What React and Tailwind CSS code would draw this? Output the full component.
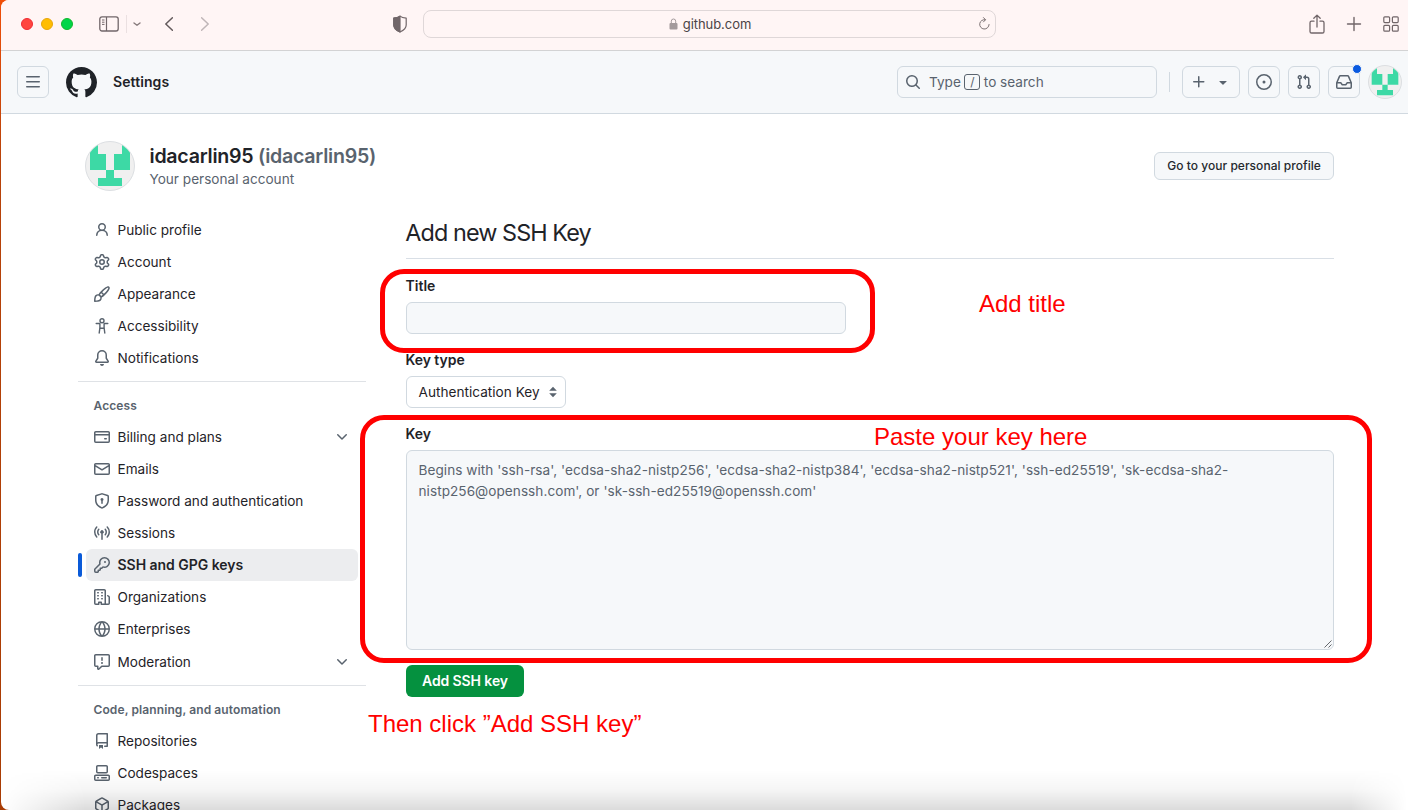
import React from "react";

const ICONS = {
  person:
    "M10.561 8.073a6.005 6.005 0 0 1 3.432 5.142.75.75 0 1 1-1.498.07 4.5 4.5 0 0 0-8.99 0 .75.75 0 0 1-1.498-.07 6.004 6.004 0 0 1 3.431-5.142 3.999 3.999 0 1 1 5.123 0ZM10.5 5a2.5 2.5 0 1 0-5 0 2.5 2.5 0 0 0 5 0Z",
  gear:
    "M8 0a8.2 8.2 0 0 1 .701.031C9.444.095 9.99.645 10.16 1.29l.288 1.107c.018.066.079.158.212.224.231.114.454.243.668.386.123.082.233.09.299.071l1.103-.303c.644-.176 1.392.021 1.82.63.27.385.506.792.704 1.218.315.675.111 1.422-.364 1.891l-.814.806c-.049.048-.098.147-.088.294.016.257.016.515 0 .772-.01.147.038.246.088.294l.814.806c.475.469.679 1.216.364 1.891a7.977 7.977 0 0 1-.704 1.217c-.428.61-1.176.807-1.82.63l-1.102-.302c-.067-.019-.177-.011-.3.071a5.909 5.909 0 0 1-.668.386c-.133.066-.194.158-.211.224l-.29 1.106c-.168.646-.715 1.196-1.458 1.26a8.006 8.006 0 0 1-1.402 0c-.743-.064-1.289-.614-1.458-1.26l-.289-1.106c-.018-.066-.079-.158-.212-.224a5.738 5.738 0 0 1-.668-.386c-.123-.082-.233-.09-.299-.071l-1.103.303c-.644.176-1.392-.021-1.82-.63a8.12 8.12 0 0 1-.704-1.218c-.315-.675-.111-1.422.363-1.891l.815-.806c.05-.048.098-.147.088-.294a6.214 6.214 0 0 1 0-.772c.01-.147-.038-.246-.088-.294l-.815-.806C.635 6.045.431 5.298.746 4.623a7.92 7.92 0 0 1 .704-1.217c.428-.61 1.176-.807 1.82-.63l1.102.302c.067.019.177.011.3-.071.214-.143.437-.272.668-.386.133-.066.194-.158.211-.224l.29-1.106C6.009.645 6.556.095 7.299.03 7.53.01 7.764 0 8 0Zm-.571 1.525c-.036.003-.108.036-.137.146l-.289 1.105c-.147.561-.549.967-.998 1.189-.173.086-.34.183-.5.29-.417.278-.97.423-1.529.27l-1.103-.303c-.109-.03-.175.016-.195.045-.22.312-.412.644-.573.99-.014.031-.021.11.059.19l.815.806c.411.406.562.957.53 1.456a4.709 4.709 0 0 0 0 .582c.032.499-.119 1.05-.53 1.456l-.815.806c-.081.08-.073.159-.059.19.162.346.353.677.573.989.02.03.085.076.195.046l1.102-.303c.56-.153 1.113-.008 1.53.27.161.107.328.204.501.29.447.222.85.629.997 1.189l.289 1.105c.029.109.101.143.137.146a6.6 6.6 0 0 0 1.142 0c.036-.003.108-.036.137-.146l.289-1.105c.147-.561.549-.967.998-1.189.173-.086.34-.183.5-.29.417-.278.97-.423 1.529-.27l1.103.303c.109.029.175-.016.195-.045.22-.313.411-.644.573-.99.014-.031.021-.11-.059-.19l-.815-.806c-.411-.406-.562-.957-.53-1.456a4.709 4.709 0 0 0 0-.582c-.032-.499.119-1.05.53-1.456l.815-.806c.081-.08.073-.159.059-.19a6.464 6.464 0 0 0-.573-.989c-.02-.03-.085-.076-.195-.046l-1.102.303c-.56.153-1.113.008-1.53-.27a4.44 4.44 0 0 0-.501-.29c-.447-.222-.85-.629-.997-1.189l-.289-1.105c-.029-.11-.101-.143-.137-.146a6.6 6.6 0 0 0-1.142 0ZM11 8a3 3 0 1 1-6 0 3 3 0 0 1 6 0ZM9.5 8a1.5 1.5 0 1 0-3.001.001A1.5 1.5 0 0 0 9.5 8Z",
  paintbrush:
    "M11.134 1.535c.7-.509 1.416-.942 2.076-1.155.649-.21 1.463-.267 2.069.34.603.601.568 1.411.368 2.07-.202.668-.624 1.39-1.125 2.096-1.011 1.424-2.496 2.987-3.775 4.249-1.098 1.084-2.132 1.839-3.04 2.3a3.744 3.744 0 0 1-1.055 3.217c-.431.431-1.065.691-1.657.861-.614.177-1.294.287-1.914.357A21.151 21.151 0 0 1 .797 16H.743l.007-.75H.749L.742 16a.75.75 0 0 1-.743-.742l.743-.008-.742.007v-.054a21.25 21.25 0 0 1 .13-2.284c.067-.647.187-1.287.358-1.914.17-.591.43-1.226.86-1.657a3.746 3.746 0 0 1 3.227-1.054c.466-.893 1.225-1.907 2.314-2.982 1.271-1.255 2.833-2.75 4.245-3.777ZM1.62 13.089c-.051.464-.086.929-.104 1.395.466-.018.932-.053 1.396-.104a10.511 10.511 0 0 0 1.668-.309c.526-.151.856-.325 1.011-.48a2.25 2.25 0 1 0-3.182-3.182c-.155.155-.329.485-.48 1.01a10.515 10.515 0 0 0-.309 1.67Zm10.396-10.34c-1.224.89-2.605 2.189-3.822 3.384l1.718 1.718c1.21-1.205 2.51-2.597 3.387-3.833.47-.662.78-1.227.912-1.662.134-.444.032-.551.009-.575h-.001V1.78c-.014-.014-.113-.113-.548.027-.432.14-.995.462-1.655.942Zm-4.832 7.266-.001.001a9.859 9.859 0 0 0 1.63-1.142L7.155 7.216a9.7 9.7 0 0 0-1.161 1.607c.482.302.889.71 1.19 1.192Z",
  bell:
    "M8 16a2 2 0 0 0 1.985-1.75c.017-.137-.097-.25-.235-.25h-3.5c-.138 0-.252.113-.235.25A2 2 0 0 0 8 16ZM3 5a5 5 0 0 1 10 0v2.947c0 .05.015.098.042.139l1.703 2.555A1.519 1.519 0 0 1 13.482 13H2.518a1.516 1.516 0 0 1-1.263-2.36l1.703-2.554A.255.255 0 0 0 3 7.947Zm5-3.5A3.5 3.5 0 0 0 4.5 5v2.947c0 .346-.102.683-.294.97l-1.703 2.556a.017.017 0 0 0-.003.01l.001.006c0 .002.002.004.004.006l.006.004.007.001h10.964l.007-.001.006-.004.004-.006.001-.007a.017.017 0 0 0-.003-.01l-1.703-2.554a1.745 1.745 0 0 1-.294-.97V5A3.5 3.5 0 0 0 8 1.5Z",
  card:
    "M10.75 9a.75.75 0 0 0 0 1.5h1.5a.75.75 0 0 0 0-1.5h-1.5ZM0 3.75C0 2.784.784 2 1.75 2h12.5c.966 0 1.75.784 1.75 1.75v8.5A1.75 1.75 0 0 1 14.25 14H1.75A1.75 1.75 0 0 1 0 12.25ZM14.5 6.5h-13v5.75c0 .138.112.25.25.25h12.5a.25.25 0 0 0 .25-.25Zm0-2.75a.25.25 0 0 0-.25-.25H1.75a.25.25 0 0 0-.25.25V5h13Z",
  mail:
    "M1.75 2h12.5c.966 0 1.75.784 1.75 1.75v8.5A1.75 1.75 0 0 1 14.25 14H1.75A1.75 1.75 0 0 1 0 12.25v-8.5C0 2.784.784 2 1.75 2ZM1.5 12.251c0 .138.112.25.25.25h12.5a.25.25 0 0 0 .25-.25V5.809L8.38 9.397a.75.75 0 0 1-.76 0L1.5 5.809v6.442Zm13-8.181v-.32a.25.25 0 0 0-.25-.25H1.75a.25.25 0 0 0-.25.25v.32L8 7.88Z",
  shield:
    "m8.533.133 5.25 1.68A1.75 1.75 0 0 1 15 3.48V7c0 1.566-.32 3.182-1.303 4.682-.983 1.498-2.585 2.813-5.032 3.855a1.697 1.697 0 0 1-1.33 0c-2.447-1.042-4.049-2.357-5.032-3.855C1.32 10.182 1 8.566 1 7V3.48a1.755 1.755 0 0 1 1.217-1.667l5.25-1.68a1.748 1.748 0 0 1 1.066 0Zm-.61 1.429.001.001-5.25 1.68a.251.251 0 0 0-.174.237V7c0 1.36.275 2.666 1.057 3.859.784 1.194 2.121 2.342 4.366 3.298a.196.196 0 0 0 .154 0c2.245-.957 3.582-2.103 4.366-3.297C13.225 9.666 13.5 8.358 13.5 7V3.48a.25.25 0 0 0-.174-.238l-5.25-1.68a.25.25 0 0 0-.153 0ZM9.5 6.5c0 .536-.286 1.032-.75 1.3v2.45a.75.75 0 0 1-1.5 0V7.8A1.5 1.5 0 1 1 9.5 6.5Z",
  broadcast:
    "M8.75 8.582v5.668a.75.75 0 0 1-1.5 0V8.582a1.75 1.75 0 1 1 1.5 0Zm3.983-7.125a.75.75 0 0 1 1.06.026A7.976 7.976 0 0 1 16 7c0 2.139-.84 4.083-2.207 5.517a.75.75 0 1 1-1.086-1.034A6.474 6.474 0 0 0 14.5 7a6.474 6.474 0 0 0-1.793-4.483.75.75 0 0 1 .026-1.06Zm-9.466 0c.3.286.312.76.026 1.06A6.474 6.474 0 0 0 1.5 7a6.47 6.47 0 0 0 1.793 4.483.75.75 0 0 1-1.086 1.034A7.973 7.973 0 0 1 0 7c0-2.139.84-4.083 2.207-5.517a.75.75 0 0 1 1.06-.026Zm8.556 2.321A4.988 4.988 0 0 1 13 7a4.988 4.988 0 0 1-1.177 3.222.75.75 0 1 1-1.146-.967A3.487 3.487 0 0 0 11.5 7c0-.86-.309-1.645-.823-2.255a.75.75 0 0 1 1.146-.967Zm-6.492.958A3.48 3.48 0 0 0 4.5 7a3.48 3.48 0 0 0 .823 2.255.75.75 0 0 1-1.146.967A4.981 4.981 0 0 1 3 7a4.982 4.982 0 0 1 1.188-3.236.75.75 0 1 1 1.143.972Z",
  key:
    "M10.5 0a5.499 5.499 0 1 1-1.288 10.848l-.932.932a.749.749 0 0 1-.53.22H7v.75a.749.749 0 0 1-.22.53l-.5.5a.749.749 0 0 1-.53.22H5v.75a.749.749 0 0 1-.22.53l-.5.5a.749.749 0 0 1-.53.22h-2A1.75 1.75 0 0 1 0 14.25v-2c0-.199.079-.389.22-.53l4.932-4.932A5.5 5.5 0 0 1 10.5 0Zm-4 5.5c-.001.431.069.86.205 1.269a.75.75 0 0 1-.181.768L1.5 12.56v1.69c0 .138.112.25.25.25h1.69l.06-.06v-1.19a.75.75 0 0 1 .75-.75h1.19l.06-.06v-1.19a.75.75 0 0 1 .75-.75h1.19l1.023-1.025a.75.75 0 0 1 .768-.18A4 4 0 1 0 6.5 5.5ZM11 6a1 1 0 1 1 0-2 1 1 0 0 1 0 2Z",
  organization:
    "M1.75 16A1.75 1.75 0 0 1 0 14.25V1.75C0 .784.784 0 1.75 0h8.5C11.216 0 12 .784 12 1.75v12.5c0 .085-.006.168-.018.25h2.268a.25.25 0 0 0 .25-.25V8.285a.25.25 0 0 0-.111-.208l-1.055-.703a.749.749 0 1 1 .832-1.248l1.055.703c.487.325.779.871.779 1.456v5.965A1.75 1.75 0 0 1 14.25 16h-3.5a.766.766 0 0 1-.197-.026c-.099.017-.2.026-.303.026h-3a.75.75 0 0 1-.75-.75V14h-1v1.25a.75.75 0 0 1-.75.75Zm-.25-1.75c0 .138.112.25.25.25H4v-1.25a.75.75 0 0 1 .75-.75h2.5a.75.75 0 0 1 .75.75v1.25h2.25a.25.25 0 0 0 .25-.25V1.75a.25.25 0 0 0-.25-.25h-8.5a.25.25 0 0 0-.25.25ZM3.75 6h.5a.75.75 0 0 1 0 1.5h-.5a.75.75 0 0 1 0-1.5ZM3 3.75A.75.75 0 0 1 3.75 3h.5a.75.75 0 0 1 0 1.5h-.5A.75.75 0 0 1 3 3.75Zm4 3A.75.75 0 0 1 7.75 6h.5a.75.75 0 0 1 0 1.5h-.5A.75.75 0 0 1 7 6.75ZM7.75 3h.5a.75.75 0 0 1 0 1.5h-.5a.75.75 0 0 1 0-1.5ZM3 9.75A.75.75 0 0 1 3.75 9h.5a.75.75 0 0 1 0 1.5h-.5A.75.75 0 0 1 3 9.75ZM7.75 9h.5a.75.75 0 0 1 0 1.5h-.5a.75.75 0 0 1 0-1.5Z",
  globe:
    "M8 0a8 8 0 1 1 0 16A8 8 0 0 1 8 0ZM5.78 8.75a9.64 9.64 0 0 0 1.363 4.177c.255.426.542.832.857 1.215.245-.296.551-.705.857-1.215A9.64 9.64 0 0 0 10.22 8.75Zm4.44-1.5a9.64 9.64 0 0 0-1.363-4.177c-.307-.51-.612-.919-.857-1.215a9.927 9.927 0 0 0-.857 1.215A9.64 9.64 0 0 0 5.78 7.25Zm-5.944 1.5H1.543a6.507 6.507 0 0 0 4.666 5.5c-.123-.181-.24-.365-.352-.552-.715-1.192-1.437-2.874-1.581-4.948Zm-2.733-1.5h2.733c.144-2.074.866-3.756 1.58-4.948.12-.197.237-.381.353-.552a6.507 6.507 0 0 0-4.666 5.5Zm10.181 1.5c-.144 2.074-.866 3.756-1.58 4.948-.12.197-.237.381-.353.552a6.507 6.507 0 0 0 4.666-5.5Zm2.733-1.5a6.507 6.507 0 0 0-4.666-5.5c.123.181.24.365.353.552.714 1.192 1.436 2.874 1.58 4.948Z",
  report:
    "M0 1.75C0 .784.784 0 1.75 0h12.5C15.216 0 16 .784 16 1.75v9.5A1.75 1.75 0 0 1 14.25 13H8.06l-2.573 2.573A1.458 1.458 0 0 1 3 14.543V13H1.75A1.75 1.75 0 0 1 0 11.25Zm1.75-.25a.25.25 0 0 0-.25.25v9.5c0 .138.112.25.25.25h2a.75.75 0 0 1 .75.75v2.19l2.72-2.72a.749.749 0 0 1 .53-.22h6.5a.25.25 0 0 0 .25-.25v-9.5a.25.25 0 0 0-.25-.25Zm7 2.25v2.5a.75.75 0 0 1-1.5 0v-2.5a.75.75 0 0 1 1.5 0ZM9 9a1 1 0 1 1-2 0 1 1 0 0 1 2 0Z",
  repo:
    "M2 2.5A2.5 2.5 0 0 1 4.5 0h8.75a.75.75 0 0 1 .75.75v12.5a.75.75 0 0 1-.75.75h-2.5a.75.75 0 0 1 0-1.5h1.75v-2h-8a1 1 0 0 0-.714 1.7.75.75 0 1 1-1.072 1.05A2.495 2.495 0 0 1 2 11.5Zm10.5-1h-8a1 1 0 0 0-1 1v6.708A2.486 2.486 0 0 1 4.5 9h8ZM5 12.25a.25.25 0 0 1 .25-.25h3.5a.25.25 0 0 1 .25.25v3.25a.25.25 0 0 1-.4.2l-1.45-1.087a.249.249 0 0 0-.3 0L5.4 15.7a.25.25 0 0 1-.4-.2Z",
  codespaces:
    "M0 11.25c0-.966.784-1.75 1.75-1.75h12.5c.966 0 1.75.784 1.75 1.75v3A1.75 1.75 0 0 1 14.25 16H1.75A1.75 1.75 0 0 1 0 14.25Zm2-9.5C2 .784 2.784 0 3.75 0h8.5C13.216 0 14 .784 14 1.75v5a1.75 1.75 0 0 1-1.75 1.75h-8.5A1.75 1.75 0 0 1 2 6.75Zm1.75-.25a.25.25 0 0 0-.25.25v5c0 .138.112.25.25.25h8.5a.25.25 0 0 0 .25-.25v-5a.25.25 0 0 0-.25-.25Zm-2 9.5a.25.25 0 0 0-.25.25v3c0 .138.112.25.25.25h12.5a.25.25 0 0 0 .25-.25v-3a.25.25 0 0 0-.25-.25ZM7 12.75a.75.75 0 0 1 .75-.75h4.5a.75.75 0 0 1 0 1.5h-4.5a.75.75 0 0 1-.75-.75Zm-4 0a.75.75 0 0 1 .75-.75h.5a.75.75 0 0 1 0 1.5h-.5a.75.75 0 0 1-.75-.75Z",
  package:
    "m8.878.392 5.25 3.045c.54.314.872.89.872 1.514v6.098a1.75 1.75 0 0 1-.872 1.514l-5.25 3.045a1.75 1.75 0 0 1-1.756 0l-5.25-3.045A1.75 1.75 0 0 1 1 11.049V4.951c0-.624.332-1.201.872-1.514L7.122.392a1.75 1.75 0 0 1 1.756 0ZM7.875 1.69l-4.63 2.685L8 7.133l4.755-2.758-4.63-2.685a.248.248 0 0 0-.25 0ZM2.5 5.677v5.372c0 .09.047.171.125.216l4.625 2.683V8.432Zm6.25 8.271 4.625-2.683a.25.25 0 0 0 .125-.216V5.677L8.75 8.432Z",
  chevron:
    "M12.78 5.22a.749.749 0 0 1 0 1.06l-4.25 4.25a.749.749 0 0 1-1.06 0L3.22 6.28a.749.749 0 1 1 1.06-1.06L8 8.939l3.72-3.719a.749.749 0 0 1 1.06 0Z",
  bars:
    "M1 2.75A.75.75 0 0 1 1.75 2h12.5a.75.75 0 0 1 0 1.5H1.75A.75.75 0 0 1 1 2.75Zm0 5A.75.75 0 0 1 1.75 7h12.5a.75.75 0 0 1 0 1.5H1.75A.75.75 0 0 1 1 7.75ZM1.75 12h12.5a.75.75 0 0 1 0 1.5H1.75a.75.75 0 0 1 0-1.5Z",
  github:
    "M8 0c4.42 0 8 3.58 8 8a8.013 8.013 0 0 1-5.45 7.59c-.4.08-.55-.17-.55-.38 0-.27.01-1.13.01-2.2 0-.75-.25-1.23-.54-1.48 1.78-.2 3.65-.88 3.65-3.95 0-.88-.31-1.59-.82-2.15.08-.2.36-1.02-.08-2.12 0 0-.67-.22-2.2.82-.64-.18-1.32-.27-2-.27-.68 0-1.36.09-2 .27-1.53-1.03-2.2-.82-2.2-.82-.44 1.1-.16 1.92-.08 2.12-.51.56-.82 1.28-.82 2.15 0 3.06 1.86 3.75 3.64 3.95-.23.2-.44.55-.51 1.07-.46.21-1.61.55-2.33-.66-.15-.24-.6-.83-1.23-.82-.67.01-.27.38.01.53.34.19.73.9.82 1.13.16.45.68 1.31 2.69.94 0 .67.01 1.3.01 1.49 0 .21-.15.45-.55.38A7.995 7.995 0 0 1 0 8c0-4.42 3.58-8 8-8Z",
  search:
    "M10.68 11.74a6 6 0 0 1-7.922-8.982 6 6 0 0 1 8.982 7.922l3.04 3.04a.749.749 0 0 1-.326 1.275.749.749 0 0 1-.734-.215ZM11.5 7a4.499 4.499 0 1 0-8.997 0A4.499 4.499 0 0 0 11.5 7Z",
  plus:
    "M7.75 2a.75.75 0 0 1 .75.75V7h4.25a.75.75 0 0 1 0 1.5H8.5v4.25a.75.75 0 0 1-1.5 0V8.5H2.75a.75.75 0 0 1 0-1.5H7V2.75A.75.75 0 0 1 7.75 2Z",
  triangle:
    "m4.427 7.427 3.396 3.396a.25.25 0 0 0 .354 0l3.396-3.396A.25.25 0 0 0 11.396 7H4.604a.25.25 0 0 0-.177.427Z",
  issue:
    "M8 9.5a1.5 1.5 0 1 0 0-3 1.5 1.5 0 0 0 0 3ZM8 0a8 8 0 1 1 0 16A8 8 0 0 1 8 0ZM1.5 8a6.5 6.5 0 1 0 13 0 6.5 6.5 0 0 0-13 0Z",
  pull:
    "M1.5 3.25a2.25 2.25 0 1 1 3 2.122v5.256a2.251 2.251 0 1 1-1.5 0V5.372A2.25 2.25 0 0 1 1.5 3.25Zm5.677-.177L9.573.677A.25.25 0 0 1 10 .854V2.5h1A2.5 2.5 0 0 1 13.5 5v5.628a2.251 2.251 0 1 1-1.5 0V5a1 1 0 0 0-1-1h-1v1.646a.25.25 0 0 1-.427.177L7.177 3.427a.25.25 0 0 1 0-.354ZM3.75 2.5a.75.75 0 1 0 0 1.5.75.75 0 0 0 0-1.5Zm0 9.5a.75.75 0 1 0 0 1.5.75.75 0 0 0 0-1.5Zm8.25.75a.75.75 0 1 0 1.5 0 .75.75 0 0 0-1.5 0Z",
  inbox:
    "M2.8 2.06A1.75 1.75 0 0 1 4.41 1h7.18c.7 0 1.333.417 1.61 1.06l2.74 6.395c.04.093.06.194.06.295v4.5A1.75 1.75 0 0 1 14.25 15H1.75A1.75 1.75 0 0 1 0 13.25v-4.5c0-.101.02-.202.06-.295Zm1.61.44a.25.25 0 0 0-.23.152L1.887 8H4.75a.75.75 0 0 1 .6.3L6.625 10h2.75l1.275-1.7a.75.75 0 0 1 .6-.3h2.863L11.82 2.652a.25.25 0 0 0-.23-.152Zm10.09 7h-2.875l-1.275 1.7a.75.75 0 0 1-.6.3h-3.5a.75.75 0 0 1-.6-.3L4.375 9.5H1.5v3.75c0 .138.112.25.25.25h12.5a.25.25 0 0 0 .25-.25Z",
};

function Icon({ name, className = "size-4 text-[#59636e]" }) {
  if (name === "accessibility") {
    return (
      <svg viewBox="0 0 16 16" fill="none" stroke="currentColor" strokeWidth="1.4" strokeLinecap="round" strokeLinejoin="round" className={`shrink-0 ${className}`}>
        <circle cx="8" cy="2.75" r="2" />
        <path d="M2.2 5.5h3.6M10.2 5.5h3.6M5.9 5.6v4L5.2 15M10.1 5.6v4l.7 5.4M6 10.2h4" />
      </svg>
    );
  }
  return (
    <svg viewBox="0 0 16 16" fill="currentColor" className={`shrink-0 ${className}`}>
      <path d={ICONS[name]} />
    </svg>
  );
}

function Avatar({ className }) {
  return (
    <div className={`shrink-0 overflow-hidden rounded-full border border-[#dcdfe2] bg-[#f0f0f0] ${className}`}>
      <svg viewBox="1 1 48 48" className="size-full" fill="#3dd9a5">
        <path d="M5 4h8v9h8v16H5zM45 4h-8v9h-8v16h16zM21 29h8v8h8v8H13v-8h8z" />
      </svg>
    </div>
  );
}

function BrowserBar() {
  return (
    <div className="flex h-[51px] shrink-0 items-center border-b border-[#d3d3d4] bg-[#fff5f5] pb-[2px] text-[#716669]">
      <div className="ml-5 flex gap-2">
        <span className="size-3 rounded-full border border-[#f02a32] bg-[#ff453f]" />
        <span className="size-3 rounded-full border border-[#e8a60a] bg-[#ffbd02]" />
        <span className="size-3 rounded-full border border-[#12b72c] bg-[#00d548]" />
      </div>
      <svg className="ml-[26px] h-4 w-5" viewBox="0 0 20 16" fill="none" stroke="currentColor">
        <rect x="0.8" y="0.8" width="18.4" height="14.2" rx="2.2" strokeWidth="1.3" />
        <path d="M7.5 1v14" strokeWidth="1.2" />
        <path d="M3 4h2.5M3 6.2h2.5M3 8.4h2.5" strokeWidth="1" />
      </svg>
      <span className="ml-[7px] h-[18px] w-px bg-[#ebe0e1]" />
      <svg className="ml-1.5 h-2 w-2" viewBox="0 0 8 8" fill="none" stroke="#867a7c" strokeWidth="1.4" strokeLinecap="round" strokeLinejoin="round">
        <path d="M1 3l3 2.3L7 3" />
      </svg>
      <svg className="ml-6 h-4 w-2" viewBox="0 0 8 16" fill="none" stroke="#635a5c" strokeWidth="1.5" strokeLinecap="round" strokeLinejoin="round">
        <path d="M7.4 1.7L0.8 8l6.6 6.3" />
      </svg>
      <svg className="ml-7 h-4 w-2" viewBox="0 0 8 16" fill="none" stroke="#bfb5b7" strokeWidth="1.5" strokeLinecap="round" strokeLinejoin="round">
        <path d="M0.6 1.7L7.2 8l-6.6 6.3" />
      </svg>
      <svg className="ml-[183px] h-[18px] w-[15px]" viewBox="0 0 15 18" fill="none" stroke="currentColor" strokeWidth="1.2" strokeLinejoin="round">
        <path d="M8 1.1C9.9 2.6 11.9 2.9 14.2 3.1V10c0 3.2-2.5 5.3-6.2 7C4.3 15.3 1.8 13.2 1.8 10V3.1C4 2.9 6.1 2.6 8 1.1Z" />
        <path d="M8 1.1V17C4.3 15.3 1.8 13.2 1.8 10V3.1C4 2.9 6.1 2.6 8 1.1Z" fill="currentColor" />
      </svg>
      <div className="ml-[16px] mt-[-1px] flex h-7 w-[573px] items-center rounded-[8px] border border-[#dfd7d8] pr-[5px]">
        <div className="flex flex-1 items-center justify-center pt-px pl-[17px]">
          <svg className="h-3 w-[9px]" viewBox="0 0 9 12">
            <rect x="0.5" y="5" width="8" height="6.5" rx="1" fill="#a39a9c" />
            <path d="M2.3 5V3.2a2.2 2.2 0 0 1 4.4 0V5" fill="none" stroke="#a39a9c" />
          </svg>
          <span className="ml-[5px] text-[13px] leading-4 tracking-[-0.05px] text-[#4b4446]">github.com</span>
        </div>
        <svg className="h-[13px] w-[11px]" viewBox="0 0 11 13" fill="none" stroke="#7b7173" strokeLinecap="round" strokeLinejoin="round">
          <path d="M6.3 2.7A4.7 4.7 0 1 0 10.1 7.5M4.5 0.6l2 2.1-2 2.2" />
        </svg>
      </div>
      <div className="ml-auto mr-[9.5px] flex items-center">
        <svg className="-mt-px h-5 w-4" viewBox="0 0 16 20" fill="none" stroke="currentColor" strokeWidth="1.3" strokeLinecap="round" strokeLinejoin="round">
          <path d="M5 7.2H2.6a1.6 1.6 0 0 0-1.6 1.6v8.6A1.6 1.6 0 0 0 2.6 19h10.8a1.6 1.6 0 0 0 1.6-1.6V8.8a1.6 1.6 0 0 0-1.6-1.6H11M8 13V1.3M4.8 4.3L8 1.1l3.2 3.2" />
        </svg>
        <svg className="ml-[20.5px] h-4 w-4" viewBox="0 0 16 16" fill="none" stroke="currentColor" strokeWidth="1.4" strokeLinecap="round">
          <path d="M8 1.5v13M1.5 8h13" />
        </svg>
        <svg className="ml-[21px] h-4 w-4" viewBox="0 0 16 16" fill="none" stroke="currentColor" strokeWidth="1.2">
          <rect x="0.8" y="0.8" width="5.8" height="5.8" rx="1" />
          <rect x="9.4" y="0.8" width="5.8" height="5.8" rx="1" />
          <rect x="0.8" y="9.4" width="5.8" height="5.8" rx="1" />
          <rect x="9.4" y="9.4" width="5.8" height="5.8" rx="1" />
        </svg>
      </div>
    </div>
  );
}

const box = "flex h-8 items-center justify-center rounded-md border border-[#d1d9e0]";

function GithubHeader() {
  return (
    <div className="flex h-[63px] shrink-0 items-center border-b border-[#d1d9e0] bg-[#f6f8fa] pl-4">
      <div className={`${box} w-8`}>
        <Icon name="bars" />
      </div>
      <Icon name="github" className="ml-[17px] size-[31px] text-[#1f2328]" />
      <span className="ml-4 text-sm font-semibold tracking-[0.08px] text-[#1f2328]">Settings</span>
      <div className="ml-auto flex items-center">
        <div className="flex h-8 w-[260px] items-center rounded-md border border-[#d1d9e0] pl-[7px] text-[13.6px] text-[#59636e]">
          <Icon name="search" />
          <span className="ml-2">Type</span>
          <span className="mx-[3.5px] flex h-4 w-4 items-center justify-center rounded-[3px] border border-[#59636e] text-xs">/</span>
          <span>to search</span>
        </div>
        <span className="ml-3 mr-3 h-5 w-px bg-[#d1d9e0]" />
        <div className={`${box} w-[58px] gap-2`}>
          <Icon name="plus" />
          <Icon name="triangle" />
        </div>
        <div className={`${box} ml-2 w-8`}>
          <Icon name="issue" />
        </div>
        <div className={`${box} ml-2 w-8`}>
          <Icon name="pull" />
        </div>
        <div className={`${box} relative ml-2 w-8`}>
          <Icon name="inbox" />
          <span className="absolute -right-[3px] -top-[3px] size-2.5 rounded-full border border-[#f6f8fa] bg-[#0a5ae0]" />
        </div>
        <Avatar className="ml-2 mr-1.5 size-[34px]" />
      </div>
    </div>
  );
}

function NavItem({ icon, label, selected, expandable }) {
  return (
    <div className="flex h-8 shrink-0 items-center">
      <span className={`h-6 w-1 shrink-0 rounded-md ${selected ? "bg-[#0a5ad8]" : ""}`} />
      <div
        className={`ml-1 mr-2 flex h-8 flex-1 items-center rounded-md px-2 text-[#1f2328] ${
          selected ? "bg-[#ecedef] text-sm font-semibold tracking-[-0.03px]" : "text-[13.6px]"
        }`}
      >
        <Icon name={icon} />
        <span className="ml-[7.5px] flex-1">{label}</span>
        {expandable && <Icon name="chevron" />}
      </div>
    </div>
  );
}

function NavHeading({ children }) {
  return (
    <div className="shrink-0 pl-[15.5px] text-xs leading-[18px] font-semibold tracking-[0.1px] text-[#59636e]">
      {children}
    </div>
  );
}

function Sidebar() {
  return (
    <nav className="flex w-[288px] shrink-0 flex-col">
      <NavItem icon="person" label="Public profile" />
      <NavItem icon="gear" label="Account" />
      <NavItem icon="paintbrush" label="Appearance" />
      <NavItem icon="accessibility" label="Accessibility" />
      <NavItem icon="bell" label="Notifications" />
      <div className="mt-[7px] mb-[15px] h-px shrink-0 bg-[#dfe2e6]" />
      <NavHeading>Access</NavHeading>
      <div className="mt-[6px]">
        <NavItem icon="card" label="Billing and plans" expandable />
        <NavItem icon="mail" label="Emails" />
        <NavItem icon="shield" label="Password and authentication" />
        <NavItem icon="broadcast" label="Sessions" />
        <NavItem icon="key" label="SSH and GPG keys" selected />
        <NavItem icon="organization" label="Organizations" />
        <NavItem icon="globe" label="Enterprises" />
        <div className="mt-px">
          <NavItem icon="report" label="Moderation" expandable />
        </div>
      </div>
      <div className="mt-[7px] mb-[15px] h-px shrink-0 bg-[#dfe2e6]" />
      <NavHeading>Code, planning, and automation</NavHeading>
      <div className="mt-[6px]">
        <NavItem icon="repo" label="Repositories" />
        <NavItem icon="codespaces" label="Codespaces" />
        <NavItem icon="package" label="Packages" />
      </div>
    </nav>
  );
}

const label = "-ml-[0.5px] text-sm leading-[21px] font-semibold";

function SshForm() {
  return (
    <main className="ml-10 flex w-[928px] flex-col items-start text-[#1f2328]">
      <h2 className="h-[45px] w-full shrink-0 border-b border-[#d9dfe6] pt-px text-[23.4px] leading-9 tracking-[-0.92px]">
        <span className="-ml-[0.7px]">Add new SSH Key</span>
      </h2>
      <div className={`${label} mt-[16px]`}>Title</div>
      <div className="mt-[6px] h-8 w-[440px] rounded-md border border-[#d1d9e0] bg-[#f6f8fa]" />
      <div className={`${label} mt-[15px] tracking-[-0.05px]`}>Key type</div>
      <div className="mt-[6px] flex h-8 w-40 items-center rounded-md border border-[#d1d9e0] pl-[11.5px] text-[13.6px] tracking-[0.02px]">
        Authentication Key
        <svg className="ml-auto mr-2 h-3 w-2" viewBox="0 0 8 12" fill="#59636e">
          <path d="M4 0.8L7.8 4.8H0.2zM4 11.2L7.8 7.2H0.2z" />
        </svg>
      </div>
      <div className={`${label} mt-[15px]`}>Key</div>
      <div className="mt-[6px] flex h-[200px] w-full rounded-md border border-[#d1d9e0] bg-[#f6f8fa] pl-[11.5px] pt-[9px] text-[13.6px] leading-[21px] tracking-[0.045px] text-[#59636e]">
        <p className="flex-1">
          Begins with 'ssh-rsa', 'ecdsa-sha2-nistp256', 'ecdsa-sha2-nistp384', 'ecdsa-sha2-nistp521', 'ssh-ed25519', 'sk-ecdsa-sha2-
          <br />
          nistp256@openssh.com', or 'sk-ssh-ed25519@openssh.com'
        </p>
        <svg className="mr-px mb-px size-2 self-end" viewBox="0 0 8 8" stroke="#55585c" strokeWidth="0.9">
          <path d="M0.5 7.5L7.5 0.5M4.5 7.5l3-3" />
        </svg>
      </div>
      <div className="mt-[15px] flex h-8 w-[118px] items-center justify-center rounded-md bg-[#05913f] text-sm font-semibold tracking-[-0.1px] text-white">
        Add SSH key
      </div>
    </main>
  );
}

const note = "absolute whitespace-nowrap font-['Liberation_Sans',Arial,sans-serif] text-2xl leading-7 text-[#ff0000]";

function Annotations() {
  return (
    <>
      <div className="absolute left-[380px] top-[269px] h-[84px] w-[495px] rounded-[24px] border-5 border-[#ff0000]" />
      <div className="absolute left-[360px] top-[415px] h-[248px] w-[1012px] rounded-[24px] border-5 border-[#ff0000]" />
      <div className={`${note} left-[979px] top-[290px]`}>Add title</div>
      <div className={`${note} left-[874px] top-[423px]`}>Paste your key here</div>
      <div className={`${note} left-[368px] top-[710px]`}>Then click ”Add SSH key”</div>
    </>
  );
}

export default function App() {
  return (
    <div className="relative flex h-[810px] w-[1408px] overflow-hidden bg-linear-to-b from-[#f04e08] via-[#b8430a] via-20% to-[#a83c04] pl-px font-['Inter',sans-serif]">
      <div className="flex min-w-0 flex-1 flex-col overflow-hidden rounded-l-[8px] bg-white">
        <BrowserBar />
        <GithubHeader />
        <div className="flex min-h-0 flex-1 flex-col pl-[77px]">
          <header className="flex h-[100px] w-[1256px] shrink-0 pl-[7px]">
            <Avatar className="mt-[27px] size-[50px]" />
            <div className="ml-[14.5px] mt-[30px]">
              <h1 className="text-[19.6px] leading-[25px] font-semibold tracking-[-0.25px] text-[#1f2328]">
                idacarlin95 <span className="text-[#59636e]">(idacarlin95)</span>
              </h1>
              <p className="text-[13.6px] leading-[21px] text-[#59636e]">Your personal account</p>
            </div>
            <div className="ml-auto mt-[38px] flex h-7 w-[180px] items-center justify-center rounded-md border border-[#d1d9e0] bg-[#f6f8fa] text-xs font-medium tracking-[0.04px] text-[#25292e]">
              Go to your personal profile
            </div>
          </header>
          <div className="flex min-h-0 flex-1">
            <Sidebar />
            <SshForm />
          </div>
        </div>
      </div>
      <Annotations />
      <div className="pointer-events-none absolute inset-x-px bottom-0 h-10 bg-linear-to-b from-black/0 via-black/4 to-black/14 mask-[linear-gradient(to_right,transparent,black_6%,black_96%,transparent)]" />
    </div>
  );
}
